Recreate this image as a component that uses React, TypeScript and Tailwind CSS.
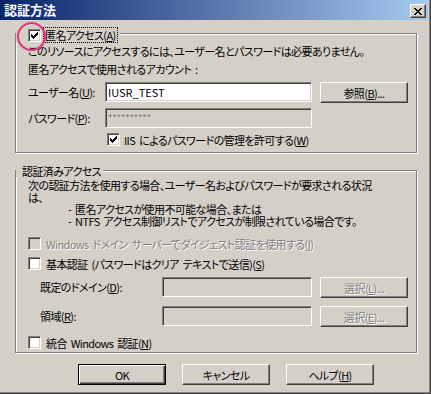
import React from "react";

const raised =
  "border border-t-white border-l-white border-r-[#404040] border-b-[#404040] shadow-[inset_-1px_-1px_0_#808080,inset_1px_1px_0_#d4d0c8]";
const sunken =
  "border border-t-[#808080] border-l-[#808080] border-r-white border-b-white shadow-[inset_1px_1px_0_#404040,inset_-1px_-1px_0_#d4d0c8]";
const grayText = "text-[#808080] [text-shadow:1px_1px_0_#fff]";

function Key({ k }: { k: string }) {
  return (
    <>
      (<span className="underline underline-offset-[1px]">{k}</span>)
    </>
  );
}

function Checkbox({ checked = false, disabled = false }: { checked?: boolean; disabled?: boolean }) {
  return (
    <div className={`w-[13px] h-[13px] shrink-0 flex items-center justify-center ${sunken} ${disabled ? "bg-[#d4d0c8]" : "bg-white"}`}>
      {checked && (
        <svg width="7" height="7" viewBox="0 0 7 7" shapeRendering="crispEdges">
          <path d="M6 0h1v3H6z M5 1h1v3H5z M4 2h1v3H4z M3 3h1v3H3z M2 4h1v3H2z M1 3h1v3H1z M0 2h1v3H0z" fill="#000" />
        </svg>
      )}
    </div>
  );
}

function Button({ children, disabled = false, def = false, className = "" }: { children: React.ReactNode; disabled?: boolean; def?: boolean; className?: string }) {
  const frame = def
    ? "border border-black shadow-[inset_1px_1px_0_#fff,inset_-1px_-1px_0_#404040,inset_-2px_-2px_0_#808080]"
    : raised;
  return (
    <div className={`w-[88px] h-[21px] shrink-0 flex items-center justify-center whitespace-nowrap ${frame} ${disabled ? grayText : ""} ${className}`}>
      {children}
    </div>
  );
}

function Field({ width, children, disabled = false }: { width: string; children?: React.ReactNode; disabled?: boolean }) {
  return (
    <div className={`${width} h-[20px] shrink-0 flex items-center pl-[2px] ${sunken} ${disabled ? "bg-[#d4d0c8]" : "bg-white"}`}>
      {children}
    </div>
  );
}

function GroupBox({ legend, className, children }: { legend: React.ReactNode; className: string; children: React.ReactNode }) {
  return (
    <div className={`relative ml-[15px] w-[402px] border border-[#808080] shadow-[1px_1px_0_#fff,inset_1px_1px_0_#fff] ${className}`}>
      <div className="absolute -top-[7px] flex items-center bg-[#d4d0c8]">{legend}</div>
      {children}
    </div>
  );
}

export default function App() {
  return (
    <div className="relative w-[431px] h-[394px] overflow-hidden bg-[#d4d0c8] pr-[3px] text-[11px] leading-[12px] tracking-[-0.6px] [word-spacing:2px] whitespace-nowrap text-black font-['Noto_Sans_CJK_JP',sans-serif] [font-feature-settings:'palt'] shadow-[inset_-1px_-1px_0_#404040,inset_-2px_-2px_0_#808080]">
      {/* title bar */}
      <div className="h-[20px] flex items-start pl-[4px] pr-[2px] bg-[linear-gradient(to_right,#0a246a,#a6caf0)]">
        <span className="mt-[3px] text-white font-bold text-[13px] leading-[14px] tracking-[0px]">認証方法</span>
        <div className={`ml-auto mt-[4px] w-[16px] h-[14px] flex items-center justify-center bg-[#d4d0c8] ${raised}`}>
          <svg width="8" height="7" viewBox="0 0 8 7" shapeRendering="crispEdges">
            <path d="M0 0h2v1H0z M6 0h2v1H6z M1 1h2v1H1z M5 1h2v1H5z M2 2h4v1H2z M3 3h2v1H3z M2 4h4v1H2z M1 5h2v1H1z M5 5h2v1H5z M0 6h2v1H0z M6 6h2v1H6z" fill="#000" />
          </svg>
        </div>
      </div>

      {/* anonymous access */}
      <GroupBox
        className="mt-[13px] h-[120px]"
        legend={
          <div className="flex items-center h-[16px] pl-[3px] pr-[2px] ml-[9px]">
            <Checkbox checked />
            <span className="ml-[2px] px-[1px] h-[16px] flex items-center border border-dotted border-black">
              匿名アクセス<Key k="A" />
            </span>
          </div>
        }
      >
        <div className="pl-[12px] pt-[11px]">
          <p>このリソースにアクセスするには、ユーザー名とパスワードは必要ありません。</p>
          <p className="mt-[6px]">匿名アクセスで使用されるアカウント :</p>
          <div className="mt-[7px] flex h-[21px]">
            <span className="w-[77px] leading-[20px]">ユーザー名<Key k="U" />:</span>
            <Field width="w-[207px]"><span className="tracking-[0px]">IUSR_TEST</span></Field>
            <Button className="ml-[8px]">参照<Key k="B" />...</Button>
          </div>
          <div className="mt-[5px] flex h-[20px]">
            <span className="w-[77px] leading-[20px]">パスワード<Key k="P" />:</span>
            <Field width="w-[207px]" disabled>
              <span className="text-[#808080] text-[10px] tracking-[-0.4px]">**********</span>
            </Field>
          </div>
          <div className="mt-[5px] ml-[79px] flex items-center h-[13px]">
            <Checkbox checked />
            <span className="ml-[4px]">IIS によるパスワードの管理を許可する<Key k="W" /></span>
          </div>
        </div>
      </GroupBox>

      {/* authenticated access */}
      <GroupBox
        className="mt-[17px] h-[183px]"
        legend={<span className="ml-[4px] px-[2px] h-[12px] mt-[1px] leading-[12px]">認証済みアクセス</span>}
      >
        <div className="pl-[12px] pt-[8px]">
          <p>
            次の認証方法を使用する場合、ユーザー名およびパスワードが要求される状況
            <br />は、
          </p>
          <p className="pl-[40px]">
            - 匿名アクセスが使用不可能な場合、または
            <br />- NTFS アクセス制御リストでアクセスが制限されている場合です。
          </p>
          <div className="mt-[10px] flex items-center h-[13px]">
            <Checkbox disabled />
            <span className={`ml-[5px] ${grayText}`}>Windows ドメイン サーバーでダイジェスト認証を使用する<Key k="I" /></span>
          </div>
          <div className="mt-[7px] flex items-center h-[13px]">
            <Checkbox />
            <span className="ml-[5px]">基本認証 (パスワードはクリア テキストで送信)<Key k="S" /></span>
          </div>
          <div className="mt-[7px] flex h-[21px]">
            <span className="w-[134px] pl-[12px] leading-[20px]">既定のドメイン<Key k="D" />:</span>
            <Field width="w-[150px]" disabled />
            <Button className="ml-[8px]" disabled>選択<Key k="L" />...</Button>
          </div>
          <div className="mt-[8px] flex h-[21px]">
            <span className="w-[134px] pl-[12px] leading-[20px]">領域<Key k="R" />:</span>
            <Field width="w-[150px]" disabled />
            <Button className="ml-[8px]" disabled>選択<Key k="E" />...</Button>
          </div>
          <div className="mt-[9px] flex items-center h-[13px]">
            <Checkbox />
            <span className="ml-[5px]">統合 Windows 認証<Key k="N" /></span>
          </div>
        </div>
      </GroupBox>

      {/* dialog buttons */}
      <div className="mt-[11px] pl-[78px] flex gap-[16px]">
        <Button def>OK</Button>
        <Button>キャンセル</Button>
        <Button>ヘルプ<Key k="H" /></Button>
      </div>

      {/* highlight mark */}
      <div className="absolute left-[17px] top-[22px] w-[29px] h-[29px] rounded-full border-2 border-[#e4307e]" />
    </div>
  );
}
